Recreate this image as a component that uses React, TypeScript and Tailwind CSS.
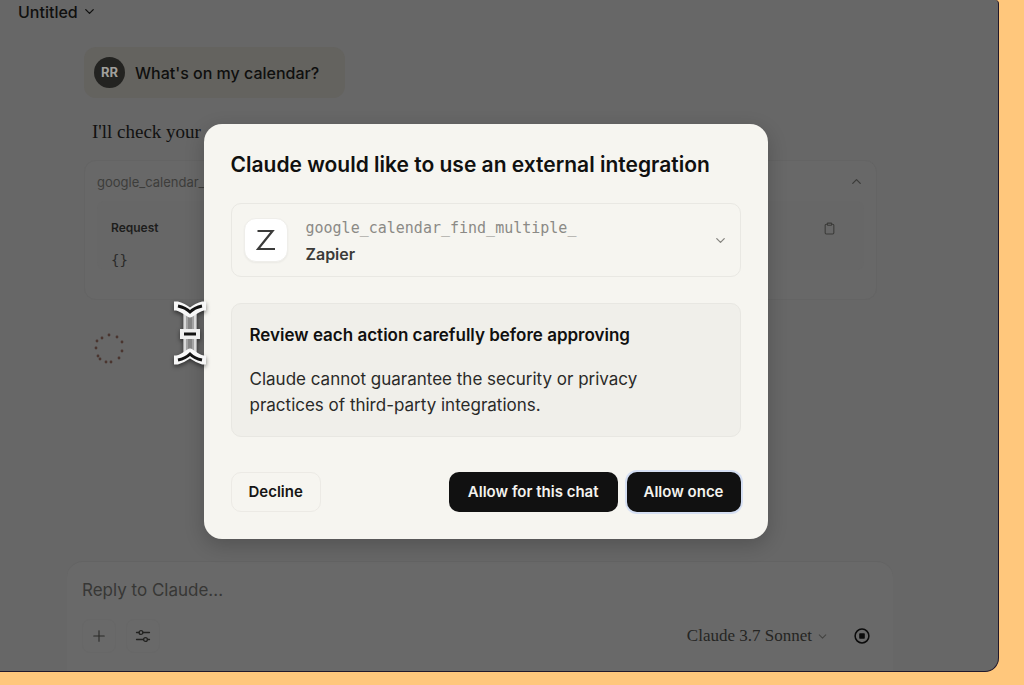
import React from 'react';
import { ChevronDown, ChevronUp, Clipboard, Plus } from 'lucide-react';

const spinnerDots = [
  [24, 10], [32, 12], [37, 17], [37, 26], [34, 33], [26, 37],
  [21, 37], [15, 34], [13, 31], [11, 23], [12, 16], [17, 13],
];

const Spinner: React.FC = () => (
  <svg className="w-[50px] h-[45px]" viewBox="0 0 50 45" fill="#4a352f" aria-label="Loading">
    {spinnerDots.map(([cx, cy]) => (
      <circle key={`${cx}-${cy}`} cx={cx} cy={cy} r="1.4" />
    ))}
  </svg>
);

const SlidersIcon: React.FC = () => (
  <svg className="w-4 h-4" viewBox="0 0 16 16" fill="none" stroke="currentColor" strokeWidth="1.3" strokeLinecap="round">
    <path d="M1.5 4.5H4M8 4.5h6.5M1.5 11.5H8.5M12.5 11.5h2" />
    <circle cx="6" cy="4.5" r="1.9" />
    <circle cx="10.5" cy="11.5" r="1.9" />
  </svg>
);

const StopIcon: React.FC = () => (
  <svg className="w-4 h-4" viewBox="0 0 16 16">
    <circle cx="8" cy="8" r="6.9" fill="none" stroke="#0b0b0b" strokeWidth="1.5" />
    <rect x="5.2" y="5.2" width="5.6" height="5.6" rx="0.7" fill="#0b0b0b" />
  </svg>
);

const TextCursor: React.FC = () => (
  <svg
    className="absolute left-[165px] top-[290px] z-20 w-[50px] h-20 pointer-events-none drop-shadow-[0_2px_2px_rgba(0,0,0,0.5)]"
    viewBox="0 0 50 80"
    fill="none"
  >
    <path d="M25 22V64" stroke="#a3a3a3" strokeWidth="14" />
    <path d="M20 24V63M30 24V63" stroke="#dadada" strokeWidth="2" />
    <path d="M25 24V63" stroke="#858585" strokeWidth="4" />
    <path d="M9 16H12C17 17 21 20 25 23C29 20 33 17 38 16H41M9 70H12C17 69 21 66 25 63C29 66 33 69 38 70H41" stroke="#f7f7f7" strokeWidth="9" strokeLinejoin="round" />
    <path d="M15 44H35" stroke="#efefef" strokeWidth="10" />
    <path d="M13 16C18 17 22 19 25 22C28 19 32 17 37 16M13 70C18 69 22 67 25 64C28 67 32 69 37 70" stroke="#111111" strokeWidth="3" />
    <path d="M19 44H31" stroke="#111111" strokeWidth="3" />
  </svg>
);

const Conversation: React.FC = () => (
  <main className="flex-1 pl-[84px] pr-[121px]">
    <div className="mt-6 inline-flex items-center gap-2.5 rounded-xl bg-[#64635f] py-2.5 pl-2.5 pr-[26px]">
      <span className="flex w-[31px] h-[31px] items-center justify-center rounded-full bg-[#232321] text-[13px] font-bold text-[#a09f9b]">RR</span>
      <p className="text-base font-medium text-[#0f0f0e]">What's on my calendar?</p>
    </div>

    <p className="mt-5 pl-2 font-['Liberation_Serif',serif] text-[19px] leading-7 text-[#121211]">I'll check your</p>

    <section className="mt-3.5 h-[140px] rounded-xl border border-[#646464] bg-[#686868] px-3">
      <div className="flex h-10 items-center justify-between">
        <span className="pt-1 text-[13px] text-[#3d3d3b]">google_calendar_find_multiple_</span>
        <button type="button" aria-label="Collapse" className="text-[#3b3b39]">
          <ChevronUp size={15} strokeWidth={2} />
        </button>
      </div>
      <div className="rounded-lg bg-[#676767] px-3.5 pt-[17px]">
        <div className="flex items-center justify-between pr-3.5">
          <h3 className="text-xs leading-5 font-semibold text-[#1d1d1c]">Request</h3>
          <button type="button" aria-label="Copy" className="text-[#3b3b39]">
            <Clipboard size={13} strokeWidth={2} />
          </button>
        </div>
        <code className="mt-3 block font-['DejaVu_Sans_Mono',monospace] text-sm text-[#2b2b2a]">{'{}'}</code>
      </div>
    </section>

    <div className="mt-[25px] pl-px">
      <Spinner />
    </div>
  </main>
);

const Composer: React.FC = () => (
  <form className="ml-[67px] mr-[105px] h-[110px] rounded-t-2xl border-t border-[#636363] bg-[#696969] px-[15px] pt-4">
    <input
      type="text"
      aria-label="Reply to Claude"
      placeholder="Reply to Claude..."
      className="block w-full bg-transparent text-[17px] leading-6 text-[#111] outline-none placeholder:text-[#373735]"
    />
    <div className="mt-[17px] flex items-center">
      <button type="button" aria-label="Add" className="flex w-[34px] h-[34px] items-center justify-center rounded-lg border border-[#676767] text-[#2b2b29]">
        <Plus size={18} strokeWidth={1.5} />
      </button>
      <button type="button" aria-label="Tools" className="ml-2.5 flex w-[34px] h-[34px] items-center justify-center rounded-lg border border-[#676767] text-[#222220]">
        <SlidersIcon />
      </button>
      <button type="button" className="ml-auto flex items-center gap-1 font-['Liberation_Serif',serif] text-[17px] text-[#252523]">
        Claude 3.7 Sonnet
        <ChevronDown size={13} strokeWidth={2} className="text-[#454543]" />
      </button>
      <button type="button" aria-label="Stop" className="ml-[25px] mr-2">
        <StopIcon />
      </button>
    </div>
  </form>
);

const IntegrationDialog: React.FC = () => (
  <div className="absolute inset-0 z-10 flex items-center justify-center pb-2 pr-[27px]">
    <div
      role="dialog"
      aria-labelledby="dialog-title"
      className="w-full max-w-[564px] rounded-[18px] bg-[#f6f5f0] px-[27px] pt-[27px] pb-[27px] shadow-[0_6px_20px_rgba(0,0,0,0.2)]"
    >
      <h1 id="dialog-title" className="text-[21px] leading-7 font-semibold text-[#10100f]">Claude would like to use an external integration</h1>

      <button type="button" className="mt-6 flex w-full items-center gap-[18px] rounded-[10px] border border-[#e9e8e3] py-2.5 pl-3 pr-3 text-left">
        <span className="flex w-11 h-11 items-center justify-center rounded-xl border border-[#efeeea] bg-white shadow-xs">
          <svg className="w-5 h-6" viewBox="0 0 20 24" fill="none" stroke="#3b3b3a" strokeWidth="2.2">
            <path d="M1.5 3H16.5L2 21H19" />
          </svg>
        </span>
        <span className="flex-1">
          <span className="block font-['DejaVu_Sans_Mono',monospace] text-[15px] leading-7 text-[#8b8a86]">google_calendar_find_multiple_</span>
          <span className="block text-base leading-6 font-semibold text-[#3b3b39]">Zapier</span>
        </span>
        <ChevronDown size={15} strokeWidth={2} className="text-[#85847f]" />
      </button>

      <section className="mt-[26px] rounded-[10px] border border-[#e8e7e2] bg-[#f0efea] p-[18px]">
        <h2 className="text-[17px] leading-[26px] font-semibold text-[#10100f]">Review each action carefully before approving</h2>
        <p className="mt-[18px] max-w-[420px] text-[17px] leading-[26px] text-[#2a2a28]">
          Claude cannot guarantee the security or privacy practices of third-party integrations.
        </p>
      </section>

      <div className="mt-[35px] flex gap-[9px] text-[15px] font-semibold">
        <button type="button" className="mr-auto h-10 rounded-[10px] border border-[#eceae5] px-[17px] text-[#161615]">Decline</button>
        <button type="button" className="h-10 rounded-[10px] bg-[#111111] px-[19px] text-[#f4f3ee]">Allow for this chat</button>
        <button type="button" className="h-10 rounded-[10px] bg-[#111111] px-[17px] text-[#f4f3ee] ring-2 ring-[#d5dff3]">Allow once</button>
      </div>
    </div>
  </div>
);

const App: React.FC = () => {
  return (
    <div className="h-screen bg-[#ffc77c] pr-[25px] pb-[13px] font-['Inter',sans-serif]">
      <div className="relative flex h-full flex-col overflow-hidden rounded-br-[14px] rounded-tr-sm border-r border-b border-[#21182b] bg-[#676767]">
        <header className="flex h-[23px] items-center pl-[18px]">
          <button type="button" className="flex items-center gap-1 text-base leading-5 font-medium text-[#10100f]">
            Untitled
            <ChevronDown size={15} strokeWidth={2} />
          </button>
        </header>
        <Conversation />
        <Composer />
        <IntegrationDialog />
        <TextCursor />
      </div>
    </div>
  );
};

export default App;
